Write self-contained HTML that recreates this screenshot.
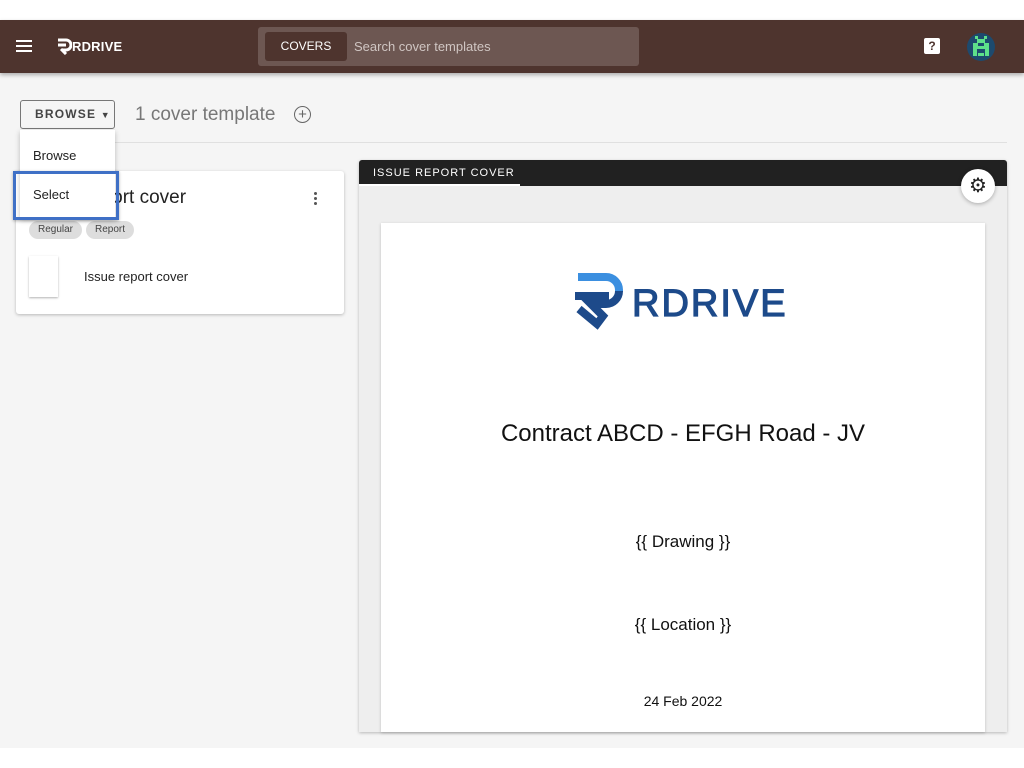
<!DOCTYPE html>
<html><head><style>
body{margin:0;width:1024px;height:768px;background:#fff;font-family:"Liberation Sans",Roboto,sans-serif;position:relative;overflow:hidden}
.a{position:absolute}
</style></head><body>
<div class="a" style="left:0;top:73px;width:1024px;height:675px;background:#f5f5f5"></div>
<div class="a" style="left:0;top:20px;width:1024px;height:53px;background:#4e342e;box-shadow:0 2px 4px rgba(0,0,0,.3)"></div>
<div class="a" style="left:16px;top:40px;width:16px;height:2px;background:#fff;box-shadow:0 5px 0 #fff,0 10px 0 #fff"></div>
<svg class="a" style="left:56px;top:38px" width="16" height="17" viewBox="0 0 16 17"><path d="M2 2h8a5 5 0 0 1 0 10H6" fill="none" stroke="#fff" stroke-width="3"/><path d="M2 7h8M5 11l5 5" stroke="#fff" stroke-width="3"/></svg>
<div class="a" style="left:72px;top:39px;color:#fff;font-weight:bold;font-size:13px;letter-spacing:.2px">RDRIVE</div>
<div class="a" style="left:258px;top:27px;width:381px;height:39px;background:#6d5752;border-radius:3px"></div>
<div class="a" style="left:265px;top:32px;width:82px;height:29px;background:#4e342e;border-radius:3px;color:#fff;font-size:12px;line-height:29px;text-align:center">COVERS</div>
<div class="a" style="left:354px;top:39px;color:#d0c6c3;font-size:13px">Search cover templates</div>
<div class="a" style="left:924px;top:38px;width:16px;height:16px;background:#fff;border-radius:2px;color:#4e342e;font-size:12px;font-weight:bold;text-align:center;line-height:16px">?</div>
<div class="a" style="left:967px;top:33px;width:28px;height:28px;border-radius:50%;background:#1d4a6e;overflow:hidden">
<svg width="28" height="28" viewBox="0 0 28 28"><g fill="#5de08a"><rect x="8" y="3" width="3" height="3"/><rect x="17" y="3" width="3" height="3"/><rect x="10" y="6" width="8" height="4"/><rect x="6" y="10" width="5" height="6"/><rect x="17" y="10" width="5" height="6"/><rect x="11" y="13" width="6" height="3"/><rect x="6" y="16" width="4" height="7"/><rect x="18" y="16" width="4" height="7"/><rect x="11" y="20" width="6" height="3"/></g></svg></div>
<div class="a" style="left:20px;top:100px;width:95px;height:29px;border:1px solid #777;border-radius:3px;background:#f5f5f5;font-size:12px;font-weight:bold;letter-spacing:1.2px;color:#444;line-height:27px;padding-left:14px;box-sizing:border-box">BROWSE <span style="font-size:9px">▼</span></div>
<div class="a" style="left:135px;top:104px;font-size:19px;color:#777">1 cover template</div>
<div class="a" style="left:294px;top:106px;width:15px;height:15px;border:1.5px solid #666;border-radius:50%;text-align:center;line-height:15px;font-size:15px;color:#666">+</div>
<div class="a" style="left:20px;top:142px;width:987px;height:1px;background:#e0e0e0"></div>
<div class="a" style="left:16px;top:171px;width:328px;height:143px;background:#fff;border-radius:3px;box-shadow:0 1px 3px rgba(0,0,0,.25)"></div>
<div class="a" style="left:34px;top:187px;font-size:19px;color:#222">Issue report cover</div>
<div class="a" style="left:314px;top:192px;width:3px;height:3px;border-radius:50%;background:#555;box-shadow:0 5px 0 #555,0 10px 0 #555"></div>
<div class="a" style="left:29px;top:221px;width:53px;height:18px;border-radius:9px;background:#ddd;font-size:10px;color:#444;text-align:center;line-height:18px">Regular</div>
<div class="a" style="left:86px;top:221px;width:48px;height:18px;border-radius:9px;background:#ddd;font-size:10px;color:#444;text-align:center;line-height:18px">Report</div>
<div class="a" style="left:29px;top:256px;width:29px;height:41px;background:#fff;box-shadow:0 1px 2px rgba(0,0,0,.3)"></div>
<div class="a" style="left:84px;top:269px;font-size:13px;color:#222">Issue report cover</div>
<div class="a" style="left:20px;top:130px;width:95px;height:88px;background:#fff;box-shadow:0 2px 5px rgba(0,0,0,.25)"></div>
<div class="a" style="left:33px;top:148px;font-size:13px;color:#222">Browse</div>
<div class="a" style="left:13px;top:171px;width:106px;height:49px;border:3px solid #3f70c6;box-sizing:border-box;box-shadow:0 1px 3px rgba(0,0,0,.3)"></div>
<div class="a" style="left:33px;top:187px;font-size:13px;color:#222">Select</div>
<div class="a" style="left:359px;top:160px;width:648px;height:572px;background:#eee;box-shadow:0 1px 3px rgba(0,0,0,.25);border-radius:3px 3px 0 0"></div>
<div class="a" style="left:359px;top:160px;width:648px;height:26px;background:#212121;border-radius:3px 3px 0 0"></div>
<div class="a" style="left:373px;top:167px;color:#fff;font-size:11px;letter-spacing:1px">ISSUE REPORT COVER</div>
<div class="a" style="left:359px;top:184px;width:161px;height:2px;background:#fff"></div>
<div class="a" style="left:381px;top:223px;width:604px;height:509px;background:#fff;box-shadow:0 1px 3px rgba(0,0,0,.2)"></div>
<div class="a" style="left:961px;top:169px;width:34px;height:34px;border-radius:50%;background:#fff;box-shadow:0 1px 4px rgba(0,0,0,.3);text-align:center;line-height:34px;font-size:20px;color:#222">⚙</div>
<svg class="a" style="left:575px;top:273px" width="52" height="62" viewBox="0 0 52 62"><path d="M3 4h28a13 13 0 0 1 13 13v2" fill="none" stroke="#3b8fe0" stroke-width="8"/><path d="M0 23h34M44 18a13 13 0 0 1-13 13H16l12 12-6 8L4 36" fill="none" stroke="#1d4a8a" stroke-width="8"/></svg>
<div class="a" style="left:632px;top:283px;font-size:38px;color:#1d4a8a;letter-spacing:2px;-webkit-text-stroke:1.2px #1d4a8a">RDRIVE</div>
<div class="a" style="left:381px;width:604px;top:420px;text-align:center;font-size:24px;color:#111">Contract ABCD - EFGH Road - JV</div>
<div class="a" style="left:381px;width:604px;top:532px;text-align:center;font-size:17px;color:#111">{{ Drawing }}</div>
<div class="a" style="left:381px;width:604px;top:615px;text-align:center;font-size:17px;color:#111">{{ Location }}</div>
<div class="a" style="left:381px;width:604px;top:693px;text-align:center;font-size:14px;color:#111">24 Feb 2022</div>
</body></html>
